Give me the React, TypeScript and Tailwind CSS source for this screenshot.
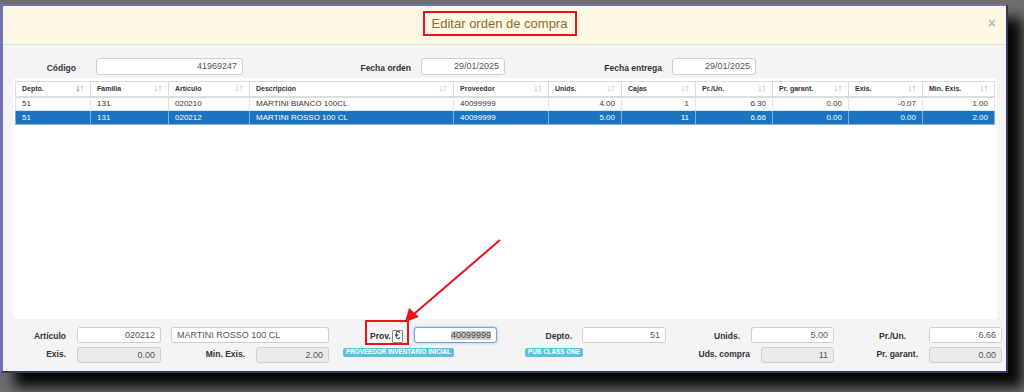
import React from "react";

const font = { fontFamily: '"Liberation Sans", Arial, sans-serif' };

function SortIcon({ active }: { active?: boolean }) {
  return (
    <svg width="8" height="7" viewBox="0 0 8 7" className="shrink-0">
      <g stroke={active ? "#9a9a9a" : "#cfcfcf"} strokeWidth="0.9" fill="none">
        <path d="M2 0.5 V6.2 M0.6 4.8 L2 6.3 L3.4 4.8" />
      </g>
      <g stroke="#cfcfcf" strokeWidth="0.9" fill="none">
        <path d="M6 6.5 V0.8 M4.6 2.2 L6 0.7 L7.4 2.2" />
      </g>
    </svg>
  );
}

const cols = [
  { name: "Depto.", w: 75, right: false },
  { name: "Familia", w: 78, right: false },
  { name: "Artículo", w: 81, right: false },
  { name: "Descripción", w: 204, right: false },
  { name: "Proveedor", w: 95, right: false },
  { name: "Unids.", w: 73, right: true },
  { name: "Cajas", w: 74, right: true },
  { name: "Pr./Un.", w: 77, right: true },
  { name: "Pr. garant.", w: 76, right: true },
  { name: "Exis.", w: 74, right: true },
  { name: "Min. Exis.", w: 72, right: true },
];

const rows = [
  ["51", "131", "020210", "MARTINI BIANCO 100CL", "40099999", "4.00", "1", "6.30", "0.00", "-0.07", "1.00"],
  ["51", "131", "020212", "MARTINI ROSSO 100 CL", "40099999", "5.00", "11", "6.66", "0.00", "0.00", "2.00"],
];

function Label({ w, children }: { w: number; children: React.ReactNode }) {
  return (
    <div
      className="shrink-0 text-right text-[8.5px] font-bold text-[#333] pt-[3px] leading-none whitespace-nowrap"
      style={{ width: w }}
    >
      {children}
    </div>
  );
}

function Input({
  w,
  value,
  ml,
  gray,
  left,
  h = 16,
}: {
  w: number;
  value: string;
  ml: number;
  gray?: boolean;
  left?: boolean;
  h?: number;
}) {
  return (
    <div
      className={`shrink-0 border border-[#cfcfcf] rounded-[3px] flex items-center px-[5px] text-[9px] text-[#555] leading-none whitespace-nowrap ${
        gray ? "bg-[#ebebeb]" : "bg-white"
      } ${left ? "justify-start text-[#333]" : "justify-end"}`}
      style={{ width: w, marginLeft: ml, height: h }}
    >
      {value}
    </div>
  );
}

export default function App() {
  return (
    <div className="w-[1024px] h-[392px] bg-[#6f6f6f] overflow-hidden relative" style={font}>
      <div className="pt-[4px]">
        <div className="w-[1008px] bg-[#f4f4f4] border-l-[3px] border-t-[2px] border-r-[2px] border-b-[2px] border-l-[#7073ad] border-t-[#7073ad] border-r-[#323a62] border-b-[#323a62] shadow-[14px_14px_12px_rgba(0,0,0,0.95)]">
          {/* header */}
          <div className="h-[39px] bg-[#fcf8e3] border-b border-[#e6e1c8] flex items-center justify-center relative">
            <div className="border-2 border-[#e8131b] w-[154px] h-[25px] flex items-center justify-center -mt-[3px] -ml-[10px]">
              <span className="text-[13px] text-[#8a6d3b] leading-none">Editar orden de compra</span>
            </div>
            <span className="absolute right-[10px] top-[10px] text-[14px] font-bold text-[#b9b9b9] leading-none">×</span>
          </div>

          {/* body */}
          <div className="pb-[8px]">
            {/* top form row */}
            <div className="flex items-center mt-[13px] h-[17px]">
              <Label w={73}>Código</Label>
              <Input w={147} ml={20} value="41969247" h={17} />
              <Label w={168}>Fecha orden</Label>
              <Input w={84} ml={10} value="29/01/2025" h={17} />
              <Label w={157}>Fecha entrega</Label>
              <Input w={84} ml={10} value="29/01/2025" h={17} />
            </div>

            {/* table panel */}
            <div className="ml-[10px] mt-[3px] w-[984px] h-[241px] bg-white rounded-[4px] pl-[2px] pt-[3px]">
              <table className="table-fixed border-collapse text-[#333]" style={{ width: 979 }}>
                <colgroup>
                  {cols.map((c) => (
                    <col key={c.name} style={{ width: c.w }} />
                  ))}
                </colgroup>
                <thead>
                  <tr className="h-[15px]">
                    {cols.map((c, i) => (
                      <th
                        key={c.name}
                        className="border-x border-t border-b-2 border-[#dddddd] px-[6px] text-left align-middle p-0"
                      >
                        <div className="flex items-center justify-between text-[7px] font-bold leading-none">
                          <span>{c.name}</span>
                          <SortIcon active={i === 0} />
                        </div>
                      </th>
                    ))}
                  </tr>
                </thead>
                <tbody>
                  {rows.map((r, ri) => (
                    <tr
                      key={ri}
                      className={`h-[14px] ${ri === 1 ? "bg-[#1b74c2] text-white" : "bg-white"}`}
                    >
                      {r.map((v, ci) => (
                        <td
                          key={ci}
                          className={`border ${
                            ri === 1 ? "border-[#7fb0dc]" : "border-[#e3e3e3]"
                          } px-[6px] py-0 text-[8px] leading-none ${cols[ci].right ? "text-right" : "text-left"}`}
                        >
                          {v}
                        </td>
                      ))}
                    </tr>
                  ))}
                </tbody>
              </table>
            </div>

            {/* bottom row A */}
            <div className="flex items-center mt-[8px] h-[16px]">
              <Label w={63}>Artículo</Label>
              <Input w={84} ml={11} value="020212" />
              <Input w={158} ml={10} value="MARTINI ROSSO 100 CL" left />
              <div className="relative flex items-center ml-[41px] w-[33px] shrink-0">
                <span className="absolute left-[-5px] top-[-8px] w-[44px] h-[25px] border-2 border-[#e8131b]" />
                <span className="text-[8.5px] font-bold text-[#333] leading-none pt-[3px]">Prov.</span>
                <span className="ml-auto w-[11px] h-[13px] border border-[#8a8a8a] bg-white rounded-[1px] flex items-center justify-center text-[10px] text-[#222] leading-none mt-[2px]">
                  €
                </span>
              </div>
              <div
                className="shrink-0 ml-[11px] w-[83px] h-[16px] bg-white border border-[#72a7dc] rounded-[3px] shadow-[0_0_3px_rgba(102,175,233,0.8)] flex items-center justify-end pr-[5px] text-[9px] text-[#444] leading-none"
              >
                <span className="bg-[#cdcdcd]">40099999</span>
              </div>
              <Label w={75}>Depto.</Label>
              <Input w={84} ml={10} value="51" />
              <Label w={74}>Unids.</Label>
              <Input w={83} ml={11} value="5.00" />
              <Label w={72}>Pr./Un.</Label>
              <Input w={73} ml={23} value="6.66" />
            </div>

            {/* bottom row B */}
            <div className="flex items-start mt-[4px] h-[16px]">
              <Label w={63}>Exis.</Label>
              <Input w={84} ml={11} value="0.00" gray />
              <Label w={84}>Min. Exis.</Label>
              <Input w={73} ml={11} value="2.00" gray />
              <div className="shrink-0 ml-[14px] mt-[1px] w-[111px] h-[9px] bg-[#5bc0de] rounded-[2px] flex items-center justify-center text-[6.3px] font-bold text-white leading-none whitespace-nowrap overflow-hidden">
                PROVEEDOR INVENTARIO INICIAL
              </div>
              <div className="shrink-0 ml-[71px] mt-[1px] w-[58px] h-[9px] bg-[#5bc0de] rounded-[2px] flex items-center justify-center text-[6.3px] font-bold text-white leading-none whitespace-nowrap overflow-hidden">
                PUB CLASS ONE
              </div>
              <Label w={167}>Uds. compra</Label>
              <Input w={73} ml={11} value="11" gray />
              <Label w={84}>Pr. garant.</Label>
              <Input w={73} ml={11} value="0.00" gray />
            </div>
          </div>
        </div>
      </div>

      {/* red arrow annotation */}
      <svg className="absolute left-0 top-0 pointer-events-none" width="1024" height="392">
        <line x1="500" y1="240" x2="414" y2="314" stroke="#e8131b" strokeWidth="2" />
        <polygon points="405,322 409,308 419,317" fill="#e8131b" />
      </svg>
    </div>
  );
}
